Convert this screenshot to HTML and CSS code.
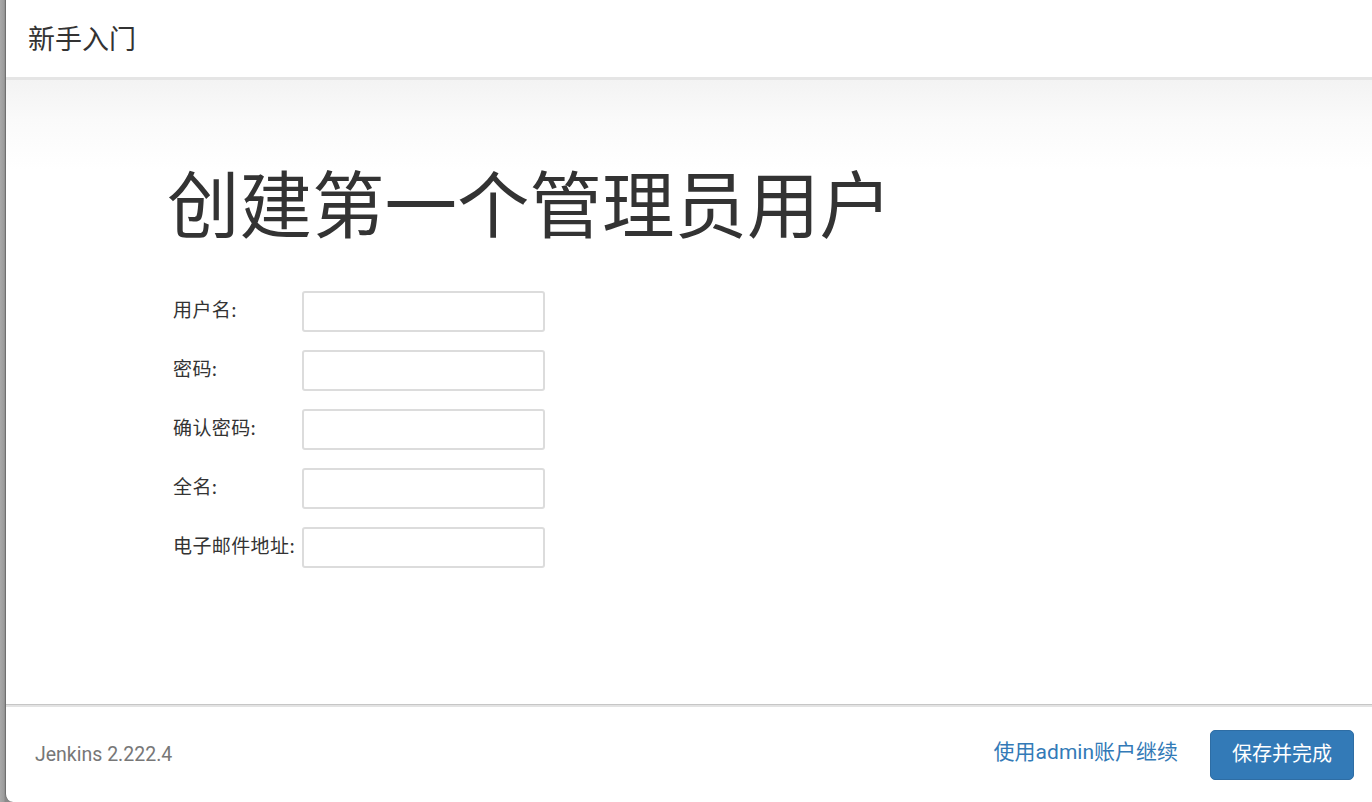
FILE: index.html
```html
<!DOCTYPE html>
<html lang="zh-CN">
<head>
<meta charset="utf-8">
<title>新手入门</title>
<link rel="stylesheet" href="styles.css">
</head>
<body>
<div class="modal">
  <div class="modal-header">
    <h4 class="modal-title">新手入门</h4>
  </div>
  <div class="modal-body">
    <h1 class="page-title">创建第一个管理员用户</h1>
    <form class="user-form">
      <div class="row"><label>用户名:</label><input type="text"></div>
      <div class="row"><label>密码:</label><input type="password"></div>
      <div class="row"><label>确认密码:</label><input type="password"></div>
      <div class="row"><label>全名:</label><input type="text"></div>
      <div class="row"><label>电子邮件地址:</label><input type="text"></div>
    </form>
  </div>
  <div class="modal-footer">
    <div class="version">Jenkins 2.222.4</div>
    <div class="actions">
      <a class="skip" href="#">使用admin账户继续</a>
      <button class="btn-primary" type="button">保存并完成</button>
    </div>
  </div>
</div>
</body>
</html>
```

FILE: styles.css
```css
html, body {
  margin: 0;
  height: 100%;
}
body {
  background: linear-gradient(to right, #a9a9a9 0, #9c9c9c 4px, #8a8a8a 5px);
  display: flex;
  overflow: hidden;
  font-family: Roboto, "Noto Sans CJK SC", sans-serif;
  color: #333;
}
.modal {
  flex: 1;
  margin-left: 5px;
  background: #fff;
  border-left: 1px solid #707070;
  border-radius: 0 0 0 8px;
  display: flex;
  flex-direction: column;
  min-width: 0;
}
.modal-header {
  height: 77px;
  padding: 0 22px;
  border-bottom: 3px solid #e5e5e5;
  display: flex;
  align-items: center;
}
.modal-title {
  margin: 0;
  font-family: "Noto Sans CJK SC", sans-serif;
  font-weight: 400;
  font-size: 27px;
  line-height: 1;
  color: #333;
  padding-bottom: 2px;
}
.modal-body {
  flex: 1;
  background: linear-gradient(#f3f3f3 0, #fafafa 40px, #fff 90px);
  padding: 78px 0 0 161px;
}
.page-title {
  margin: 0 0 47px;
  font-family: "Noto Sans CJK SC", sans-serif;
  font-weight: 400;
  font-size: 72.5px;
  line-height: 86px;
  color: #333;
}
.user-form {
  display: flex;
  flex-direction: column;
  gap: 18px;
  padding-left: 6px;
}
.row {
  display: flex;
  align-items: flex-start;
}
.row label {
  width: 129px;
  font-family: "Noto Sans CJK SC", sans-serif;
  font-size: 19px;
  letter-spacing: 0.4px;
  line-height: 24px;
  padding-top: 6px;
  white-space: nowrap;
  color: #333;
}
.row input {
  box-sizing: border-box;
  width: 243px;
  height: 41px;
  margin: 0;
  border: 2px solid #dcdcdc;
  border-radius: 3px;
  background: #fff;
  font-size: 18px;
  padding: 4px 10px;
  outline: none;
}
.modal-footer {
  height: 95px;
  border-top: 1px solid #c6c6c6;
  box-shadow: inset 0 2px 0 #e3e3e3;
  display: flex;
  align-items: center;
  justify-content: space-between;
  padding: 2px 18px 0 29px;
}
.version {
  font-family: Roboto, sans-serif;
  font-size: 19.5px;
  color: #777;
}
.actions {
  display: flex;
  align-items: center;
  gap: 32px;
}
.skip {
  font-family: Roboto, "Noto Sans CJK SC", sans-serif;
  font-size: 21px;
  line-height: 1;
  padding-bottom: 4px;
  color: #337ab7;
  text-decoration: none;
}
.btn-primary {
  box-sizing: border-box;
  width: 144px;
  height: 50px;
  background: #337ab7;
  border: 1px solid #2e6da4;
  border-radius: 5px;
  color: #fff;
  font-family: "Noto Sans CJK SC", sans-serif;
  font-size: 20px;
  line-height: 1;
  padding: 0 0 4px;
  cursor: pointer;
}
```
